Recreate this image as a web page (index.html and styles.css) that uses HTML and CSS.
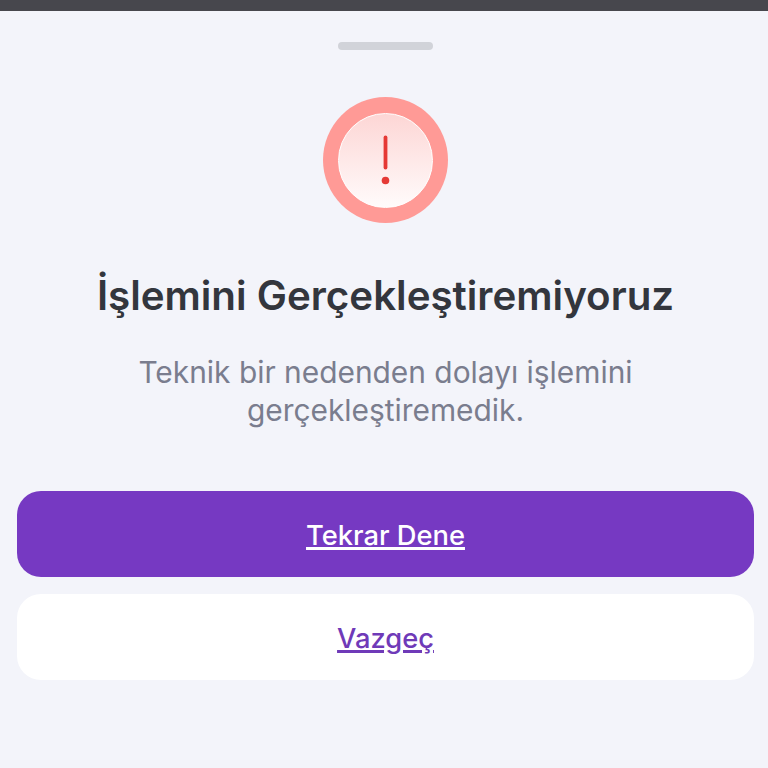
FILE: index.html
```html
<!DOCTYPE html>
<html lang="tr">
<head>
    <meta charset="UTF-8">
    <meta name="viewport" content="width=device-width, initial-scale=1.0">
    <title>İşlemini Gerçekleştiremiyoruz</title>
    <link rel="stylesheet" href="styles.css">
</head>
<body>
    <div class="top-bar"></div>
    <main class="sheet">
        <div class="handle"></div>
        <div class="error-ring">
            <div class="error-circle">
                <svg width="10" height="52" viewBox="0 0 10 52">
                    <line x1="4.5" y1="3.5" x2="4.5" y2="33.5" stroke="#e53935" stroke-width="3.8" stroke-linecap="round"/>
                    <circle cx="4.5" cy="46.5" r="3.8" fill="#e53935"/>
                </svg>
            </div>
        </div>
        <h1 class="title">İşlemini Gerçekleştiremiyoruz</h1>
        <p class="message">Teknik bir nedenden dolayı işlemini<br>gerçekleştiremedik.</p>
        <div class="actions">
            <a class="btn btn-primary" href="#">Tekrar Dene</a>
            <a class="btn btn-secondary" href="#">Vazgeç</a>
        </div>
    </main>
</body>
</html>
```

FILE: styles.css
```css
html, body {
    height: 100%;
}

body {
    font-family: 'Inter', sans-serif;
    margin: 0;
    padding: 0;
    background-color: #f3f4fa;
    overflow: hidden;
}

.top-bar {
    height: 11px;
    background-color: #47474d;
}

.sheet {
    display: flex;
    flex-direction: column;
    align-items: center;
    padding: 31px 14px 0 17px;
}

.handle {
    width: 95px;
    height: 8px;
    border-radius: 4px;
    background-color: #d1d3d9;
}

.error-ring {
    width: 125px;
    height: 126px;
    margin-top: 47px;
    border-radius: 50%;
    background-color: #ff9a96;
    display: flex;
    align-items: center;
    justify-content: center;
}

.error-circle {
    box-sizing: border-box;
    width: 95px;
    height: 95px;
    border: 1px solid #fff;
    border-radius: 50%;
    background: linear-gradient(#fdd6d5, #fffbfb);
    display: flex;
    align-items: center;
    justify-content: center;
}

.title {
    margin: 45px 0 0;
    font-size: 40.3px;
    line-height: 56px;
    font-weight: 600;
    color: #33363d;
    white-space: nowrap;
}

.message {
    margin: 29px 0 0;
    font-size: 29.9px;
    line-height: 38px;
    font-weight: 400;
    color: #7a7d8e;
    text-align: center;
}

.actions {
    width: 100%;
    margin-top: 62px;
    display: flex;
    flex-direction: column;
    gap: 17px;
}

.btn {
    box-sizing: border-box;
    height: 86px;
    padding-top: 3px;
    display: flex;
    align-items: center;
    justify-content: center;
    border-radius: 24px;
    font-size: 27.3px;
    font-weight: 550;
    text-decoration: underline;
    text-decoration-thickness: 3px;
}

.btn-primary {
    background-color: #7639c2;
    color: #fff;
}

.btn-secondary {
    background-color: #fff;
    color: #6f3ab8;
}
```
